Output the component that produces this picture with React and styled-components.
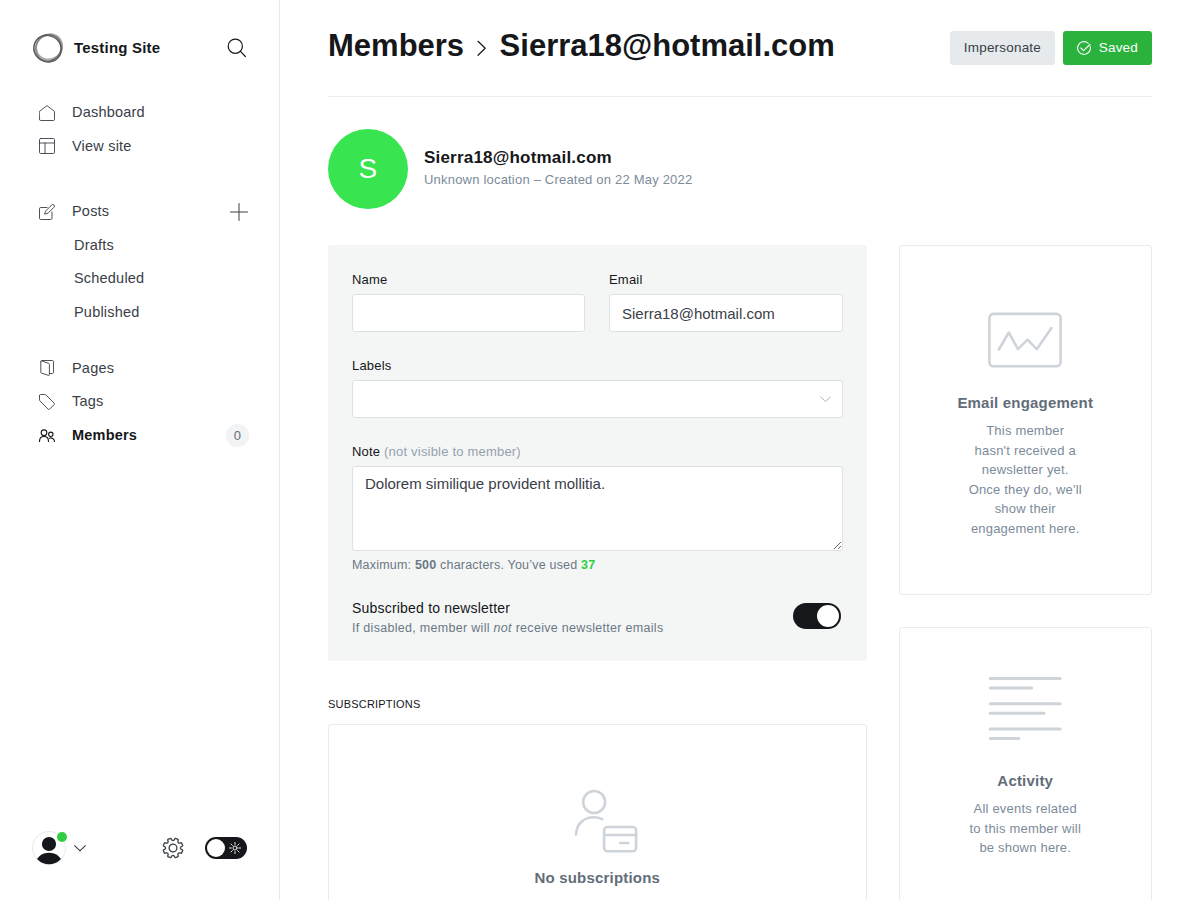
import React from 'react';
import styled, { createGlobalStyle } from 'styled-components';

const Global = createGlobalStyle`
  *, *::before, *::after { box-sizing: border-box; }
  html, body { margin: 0; padding: 0; overflow: hidden; background: #fff; }
  body { font-family: "Liberation Sans", Arial, sans-serif; font-size: 15px; letter-spacing: 0.2px; color: #15171a; }
  h1, h2, h3, p { margin: 0; }
  svg { display: block; flex: none; fill: none; }
`;

const Shell = styled.div`
  display: flex;
  width: 1200px;
  height: 900px;
  overflow: hidden;
`;

const Sidebar = styled.nav`
  display: flex;
  flex-direction: column;
  flex: none;
  width: 280px;
  height: 900px;
  border-right: 1px solid #e6e9eb;
`;

const SiteHeader = styled.div`
  display: flex;
  align-items: center;
  height: 32px;
  margin: 32px 32px 0 32px;
`;

const SiteName = styled.div`
  flex: 1;
  margin-left: 10px;
  padding-bottom: 2px;
  font-size: 15px;
  font-weight: 700;
`;

const Menu = styled.div`
  display: flex;
  flex-direction: column;
  margin-top: ${(p) => p.$gap}px;
`;

const MenuItem = styled.a`
  display: flex;
  align-items: center;
  height: 33.5px;
  padding: 0 ${(p) => (p.$action ? 31 : 30)}px 0 39px;
  font-size: 14.5px;
  line-height: 17px;
  color: ${(p) => (p.$active ? '#15171a' : '#394047')};
  font-weight: ${(p) => (p.$active ? 700 : 400)};
  svg { margin-top: 0.6px; }
`;

const MenuText = styled.span`
  flex: 1;
  margin-left: 17px;
`;

const SubItem = styled(MenuItem)`
  padding-left: 74px;
`;

const Count = styled.span`
  width: 23px;
  height: 23px;
  border-radius: 12px;
  background: #f1f3f4;
  color: #626d79;
  font-size: 13px;
  font-weight: 400;
  line-height: 23px;
  text-align: center;
`;

const SidebarFooter = styled.div`
  display: flex;
  align-items: center;
  height: 34px;
  margin: auto 32px 35px 32px;
`;

const UserAvatar = styled.div`
  position: relative;
  width: 34px;
  height: 34px;
  margin-right: 8px;
`;

const Notice = styled.span`
  position: absolute;
  top: 1px;
  right: -1px;
  width: 10px;
  height: 10px;
  border-radius: 50%;
  background: #30cf43;
`;

const NightSwitch = styled.div`
  display: flex;
  align-items: center;
  justify-content: space-between;
  width: 42px;
  height: 22px;
  margin-left: 21px;
  padding: 0 6px 0 2px;
  border-radius: 11px;
  background: #15171a;
`;

const Knob = styled.span`
  width: ${(p) => p.$size}px;
  height: ${(p) => p.$size}px;
  border-radius: 50%;
  background: #fff;
`;

const Spacer = styled.span`
  flex: 1;
`;

const Main = styled.main`
  flex: 1;
  min-width: 0;
  padding: 0 48px;
`;

const Header = styled.header`
  display: flex;
  align-items: center;
  height: 97px;
  border-bottom: 1px solid #ebeef0;
`;

const Title = styled.h1`
  display: flex;
  align-items: center;
  flex: 1;
  height: 36px;
  margin-bottom: 5px;
  font-size: 31px;
  font-weight: 700;
  letter-spacing: 0;
  white-space: nowrap;
  svg { margin: 5px 12.5px 0 12px; }
`;

const Button = styled.button`
  display: flex;
  align-items: center;
  gap: 8px;
  height: 34px;
  margin-left: 8px;
  padding: 0 ${(p) => (p.$primary ? 14 : 13.7)}px 1.5px;
  border: 0;
  border-radius: 3px;
  font: inherit;
  font-size: 13.5px;
  letter-spacing: 0.2px;
  background: ${(p) => (p.$primary ? '#2ab23c' : '#e6eaed')};
  color: ${(p) => (p.$primary ? '#fff' : '#394047')};
`;

const MemberHead = styled.section`
  display: flex;
  align-items: center;
  gap: 16px;
  height: 80px;
  margin-top: 32px;
`;

const MemberAvatar = styled.div`
  width: 80px;
  height: 80px;
  border-radius: 50%;
  background: #38e551;
  color: #fff;
  font-size: 28px;
  line-height: 80px;
  text-align: center;
`;

const MemberText = styled.div`
  padding-bottom: 3px;
`;

const MemberName = styled.h3`
  font-size: 17px;
  line-height: 24px;
`;

const MemberMeta = styled.p`
  font-size: 13px;
  line-height: 20px;
  color: #7c8b9a;
`;

const Columns = styled.div`
  display: grid;
  grid-template-columns: 539px 253px;
  gap: 32px;
  align-items: start;
  margin-top: 36px;
`;

const Column = styled.div`
  display: flex;
  flex-direction: column;
  gap: ${(p) => p.$gap}px;
`;

const Form = styled.section`
  height: 416px;
  padding: 25px 24px 0;
  border-radius: 3px;
  background: #f4f6f6;
`;

const FieldRow = styled.div`
  display: grid;
  grid-template-columns: ${(p) => (p.$split ? '233px 1fr' : '1fr')};
  gap: 24px;
  margin-bottom: 24px;
`;

const Field = styled.label`
  display: block;
  min-width: 0;
  font-size: 13px;
  line-height: 20px;
  em { font-style: normal; color: #95a1ad; }
`;

const Input = styled.input`
  display: block;
  width: 100%;
  height: 38px;
  margin-top: 4px;
  padding: 1px 12px 0;
  border: 1px solid #dde1e3;
  border-radius: 3px;
  background: #fff;
  color: #394047;
  font: inherit;
  font-size: 15px;
  letter-spacing: 0;
  outline: none;
`;

const SelectBox = styled.div`
  display: flex;
  align-items: center;
  justify-content: flex-end;
  height: 38px;
  margin-top: 4px;
  padding: 0 11px 0 0;
  border: 1px solid #dde1e3;
  border-radius: 3px;
  background: #fff;
`;

const TextArea = styled.textarea`
  display: block;
  width: 100%;
  height: 85px;
  margin-top: 4px;
  padding: 5px 12px;
  border: 1px solid #dde1e3;
  border-radius: 3px;
  background: #fff;
  color: #394047;
  font: inherit;
  font-size: 15px;
  line-height: 23px;
  letter-spacing: 0;
  outline: none;
`;

const Hint = styled.p`
  font-size: 12.5px;
  line-height: 20px;
  letter-spacing: 0.3px;
  color: #6b7885;
`;

const CountHint = styled(Hint)`
  margin-top: 4px;
  letter-spacing: 0.2px;
`;

const Used = styled.b`
  color: #30cf43;
`;

const ToggleRow = styled.div`
  display: flex;
  align-items: flex-start;
  justify-content: space-between;
  margin-top: 23px;
  padding-right: 2px;
`;

const ToggleTitle = styled.div`
  font-size: 14px;
  line-height: 20px;
`;

const Toggle = styled.div`
  display: flex;
  justify-content: flex-end;
  align-items: center;
  width: 48px;
  height: 26px;
  margin-top: 5px;
  padding: 0 2px;
  border-radius: 13px;
  background: #15171a;
`;

const SectionTitle = styled.h2`
  margin: 36px 0 13px;
  font-size: 11px;
  font-weight: 400;
  line-height: 14px;
`;

const Card = styled.section`
  display: flex;
  flex-direction: column;
  align-items: center;
  height: ${(p) => p.$height}px;
  padding-top: ${(p) => p.$top}px;
  padding-right: 0.5px;
  border: 1px solid #e9ecee;
  border-radius: 3px;
  text-align: center;
  svg { margin-left: 1px; }
`;

const CardTitle = styled.h3`
  margin-top: ${(p) => p.$top}px;
  font-size: 15px;
  line-height: 20px;
  color: #626d79;
`;

const CardText = styled.p`
  width: 115px;
  margin-top: 8px;
  font-size: 13px;
  line-height: 19.5px;
  color: #7c8b9a;
`;

const LogoIcon = () => (
  <svg width="32" height="32" viewBox="0 0 32 32">
    <ellipse cx="17.2" cy="14.8" rx="13.3" ry="12.4" stroke="#aaa" strokeWidth="1.8" transform="rotate(-35 17.2 14.8)" />
    <ellipse cx="16.8" cy="16.2" rx="13.4" ry="12.8" stroke="#888" strokeWidth="1.5" transform="rotate(-55 16.8 16.2)" />
    <ellipse cx="15.3" cy="15.9" rx="13.7" ry="13.2" stroke="#666" strokeWidth="1.1" transform="rotate(-20 15.3 15.9)" />
    <ellipse cx="15.6" cy="16.8" rx="13.9" ry="13" stroke="#555" strokeWidth="1.1" transform="rotate(35 15.6 16.8)" />
  </svg>
);

const SearchIcon = () => (
  <svg width="20" height="20" viewBox="0 0 20 20" stroke="#15171a" strokeWidth="1.2" strokeLinecap="round">
    <circle cx="8.3" cy="8.2" r="7.1" />
    <path d="M13.4 13.3 18.4 18.5" />
  </svg>
);

const navPaths = {
  home: <path d="M.5 6.4 8 .6l7.5 5.8v8a1.1 1.1 0 0 1-1.1 1.1H1.6A1.1 1.1 0 0 1 .5 14.4z" />,
  site: (
    <>
      <rect x=".5" y=".5" width="15" height="15" rx="1.2" />
      <path d="M.5 5h15M6 5v10.5" />
    </>
  ),
  posts: (
    <>
      <path d="M8 3.5H1.7A1.2 1.2 0 0 0 .5 4.7v9.6a1.2 1.2 0 0 0 1.2 1.2h10.1a1.2 1.2 0 0 0 1.2-1.2V8" />
      <path d="m6.8 6.9 5.9-5.9a1.5 1.5 0 0 1 2.3 2.2l-6 6-3 .8z" />
    </>
  ),
  pages: (
    <>
      <path d="M1.8 1.5v10.7c0 .5.3.9.8 1l7 2.2c.5.1.8-.2.8-.7V4.4c0-.5-.3-.9-.8-1L2.8.9" />
      <path d="M1.8 1.8C1.8 1 2.2.5 3 .5h10.3c.7 0 1.2.5 1.2 1.2v10.7c0 .6-.5 1.1-1.1 1.1h-3" />
    </>
  ),
  tags: <path d="M.5 1.7v4.2c0 .4.2.8.5 1.1l8.2 8.2c.4.4.9.4 1.3 0l4.7-4.7c.4-.4.4-.9 0-1.3L7 1a1.7 1.7 0 0 0-1.2-.5H1.7C1 .5.5 1 .5 1.7z" />,
  members: (
    <>
      <circle cx="5" cy="5.7" r="2.8" />
      <path d="M.5 14.4c0-3 1.9-4.9 4.5-4.9s4.5 1.9 4.5 4.9" />
      <circle cx="11.8" cy="7.3" r="2.2" />
      <path d="M10.2 11.2c2.7-.9 5.1.5 5.3 3.2" />
    </>
  ),
};

const NavIcon = ({ name, color = '#394047' }) => (
  <svg width="16" height="16" viewBox="0 0 16 16" stroke={color} strokeWidth={name === 'members' ? 1.1 : 0.9} strokeLinejoin="round" strokeLinecap="round">
    {navPaths[name]}
  </svg>
);

const PlusIcon = () => (
  <svg width="18" height="18" viewBox="0 0 18 18" stroke="#394047" strokeLinecap="round">
    <path d="M9 .5v17M.5 9h17" />
  </svg>
);

const ChevronDown = ({ width, color, strokeWidth = 1 }) => (
  <svg width={width} height={8} viewBox="0 0 12 8" stroke={color} strokeWidth={strokeWidth} strokeLinecap="round" strokeLinejoin="round">
    <path d="m.7 1.6 5.3 5.3 5.3-5.3" />
  </svg>
);

const PersonIcon = () => (
  <svg width="34" height="34" viewBox="0 0 34 34">
    <defs>
      <clipPath id="person-clip"><circle cx="17" cy="17" r="16.2" /></clipPath>
    </defs>
    <circle cx="17" cy="17" r="16.5" stroke="#e6e9eb" />
    <circle cx="17" cy="13" r="7.1" fill="#15171a" />
    <ellipse cx="17" cy="32.7" rx="13.2" ry="11" fill="#15171a" clipPath="url(#person-clip)" />
  </svg>
);

const teeth = Array.from({ length: 8 }, (_, i) => {
  const at = (radius, deg) => {
    const a = ((deg + i * 45) * Math.PI) / 180;
    return `${(11 + radius * Math.cos(a)).toFixed(2)} ${(11 + radius * Math.sin(a)).toFixed(2)}`;
  };
  return `${i ? 'L' : 'M'}${at(10, -9)}L${at(10, 9)}Q${at(9.7, 12)} ${at(8.5, 13)}Q${at(6.5, 22.5)} ${at(8.5, 32)}Q${at(9.7, 33)} ${at(10, 36)}`;
}).join('');

const GearIcon = () => (
  <svg width="22" height="22" viewBox="0 0 22 22" stroke="#394047" strokeWidth="1.3" strokeLinejoin="round">
    <path d={`${teeth}Z`} transform="rotate(22.5 11 11)" />
    <circle cx="11" cy="11" r="3.9" />
  </svg>
);

const SunIcon = () => (
  <svg width="12" height="12" viewBox="0 0 12 12" stroke="#fff" strokeWidth=".9" strokeLinecap="round">
    <circle cx="6" cy="6" r="2" />
    <path d="M6 .4v2M6 9.6v2M.4 6h2M9.6 6h2M2 2l1.4 1.4M8.6 8.6 10 10M2 10l1.4-1.4M8.6 3.4 10 2" />
  </svg>
);

const CrumbIcon = () => (
  <svg width="11" height="17" viewBox="0 0 11 17" stroke="#15171a" strokeWidth="1.2" strokeLinecap="round" strokeLinejoin="round">
    <path d="m2 1.3 7.2 7L2 15.3" />
  </svg>
);

const SavedIcon = () => (
  <svg width="14" height="15" viewBox="0 -1 14 15" stroke="#fff" strokeWidth="1.1" strokeLinecap="round" strokeLinejoin="round">
    <path d="M13.1 5.1A6.4 6.4 0 1 1 11.2 2.2" />
    <path d="m3.9 7 2.6 2.7L13 3.3" />
  </svg>
);

const ChartIcon = () => (
  <svg width="76" height="56" viewBox="0 0 76 56" stroke="#ced4d9" strokeWidth="2.6" strokeLinecap="round" strokeLinejoin="round">
    <rect x="1.4" y="1.9" width="71.2" height="52.3" rx="4" />
    <path d="m10.8 37.5 10-17 9.2 16.7 9.5-9.5 9.3 9.5L63.4 16" />
  </svg>
);

const LinesIcon = () => (
  <svg width="76" height="66" viewBox="0 0 76 66" stroke="#ced4d9" strokeWidth="3" strokeLinecap="round">
    <path d="M2.2 2.4h70M2.2 12h41.5M2.2 27.7h70M2.2 37.2h54M2.2 53h70M2.2 62.5h28.8" />
  </svg>
);

const SubscriberIcon = () => (
  <svg width="80" height="64" viewBox="-16 0 80 64" stroke="#ced4d9" strokeWidth="2.6" strokeLinecap="round" strokeLinejoin="round">
    <circle cx="20.1" cy="13" r="11" />
    <path d="M2.1 45.5C2.4 34.5 10 28.2 20 28.2c3 0 5.8.7 8.3 1.9" />
    <rect x="30.1" y="38" width="32" height="24.3" rx="3.5" />
    <path d="M30.1 46h32M46.1 54h8.2" />
  </svg>
);

export default function App() {
  return (
    <Shell>
      <Global />
      <Sidebar>
        <SiteHeader>
          <LogoIcon />
          <SiteName>Testing Site</SiteName>
          <SearchIcon />
        </SiteHeader>
        <Menu $gap={31.8}>
          <MenuItem><NavIcon name="home" /><MenuText>Dashboard</MenuText></MenuItem>
          <MenuItem><NavIcon name="site" /><MenuText>View site</MenuText></MenuItem>
        </Menu>
        <Menu $gap={32}>
          <MenuItem $action><NavIcon name="posts" /><MenuText>Posts</MenuText><PlusIcon /></MenuItem>
          <SubItem>Drafts</SubItem>
          <SubItem>Scheduled</SubItem>
          <SubItem>Published</SubItem>
        </Menu>
        <Menu $gap={22.5}>
          <MenuItem><NavIcon name="pages" /><MenuText>Pages</MenuText></MenuItem>
          <MenuItem><NavIcon name="tags" /><MenuText>Tags</MenuText></MenuItem>
          <MenuItem $active><NavIcon name="members" color="#15171a" /><MenuText>Members</MenuText><Count>0</Count></MenuItem>
        </Menu>
        <SidebarFooter>
          <UserAvatar><PersonIcon /><Notice /></UserAvatar>
          <ChevronDown width={12} color="#394047" strokeWidth={1.1} />
          <Spacer />
          <GearIcon />
          <NightSwitch><Knob $size={18} /><SunIcon /></NightSwitch>
        </SidebarFooter>
      </Sidebar>
      <Main>
        <Header>
          <Title>Members<CrumbIcon />Sierra18@hotmail.com</Title>
          <Button>Impersonate</Button>
          <Button $primary><SavedIcon />Saved</Button>
        </Header>
        <MemberHead>
          <MemberAvatar>S</MemberAvatar>
          <MemberText>
            <MemberName>Sierra18@hotmail.com</MemberName>
            <MemberMeta>Unknown location – Created on 22 May 2022</MemberMeta>
          </MemberText>
        </MemberHead>
        <Columns>
          <div>
            <Form>
              <FieldRow $split>
                <Field>Name<Input /></Field>
                <Field>Email<Input defaultValue="Sierra18@hotmail.com" /></Field>
              </FieldRow>
              <FieldRow>
                <Field>
                  Labels
                  <SelectBox><ChevronDown width={11} color="#a3adb8" /></SelectBox>
                </Field>
              </FieldRow>
              <Field>
                Note <em>(not visible to member)</em>
                <TextArea spellCheck={false} defaultValue="Dolorem similique provident mollitia." />
              </Field>
              <CountHint>Maximum: <b>500</b> characters. You’ve used <Used>37</Used></CountHint>
              <ToggleRow>
                <div>
                  <ToggleTitle>Subscribed to newsletter</ToggleTitle>
                  <Hint>If disabled, member will <i>not</i> receive newsletter emails</Hint>
                </div>
                <Toggle><Knob $size={22} /></Toggle>
              </ToggleRow>
            </Form>
            <SectionTitle>SUBSCRIPTIONS</SectionTitle>
            <Card $height={280} $top={64}>
              <SubscriberIcon />
              <CardTitle $top={15}>No subscriptions</CardTitle>
            </Card>
          </div>
          <Column $gap={32}>
            <Card $height={350} $top={66}>
              <ChartIcon />
              <CardTitle $top={25}>Email engagement</CardTitle>
              <CardText>This member hasn't received a newsletter yet. Once they do, we'll show their engagement here.</CardText>
            </Card>
            <Card $height={350} $top={48}>
              <LinesIcon />
              <CardTitle $top={29}>Activity</CardTitle>
              <CardText>All events related to this member will be shown here.</CardText>
            </Card>
          </Column>
        </Columns>
      </Main>
    </Shell>
  );
}
